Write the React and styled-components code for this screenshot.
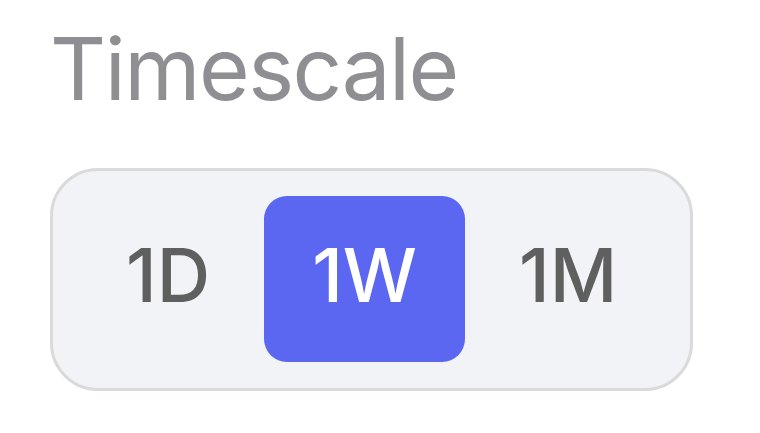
import React, { useState } from "react";
import styled, { createGlobalStyle } from "styled-components";

const Global = createGlobalStyle`
  html, body { margin: 0; padding: 0; background: #ffffff; }
  body { font-family: Inter, "Noto Sans", sans-serif; }
`;

const Page = styled.div`
  padding: 25px 0 0 50px;
  display: flex;
  flex-direction: column;
  align-items: flex-start;
  gap: 56px;
`;

const Title = styled.div`
  font-size: 87px;
  line-height: 1;
  font-weight: 400;
  color: #8e8e93;
  letter-spacing: -1.5px;
`;

const Segmented = styled.div`
  display: flex;
  align-items: stretch;
  gap: 6px;
  padding: 25px 25px 26px;
  background: #f2f3f7;
  border: 3px solid #dadada;
  border-radius: 48px;
`;

const Segment = styled.button`
  height: 166px;
  padding: 0 48px 8px;
  border: none;
  border-radius: 23px;
  font-family: Inter, "Noto Sans", sans-serif;
  font-size: 74px;
  line-height: 1;
  font-weight: 500;
  display: flex;
  align-items: center;
  justify-content: center;
  cursor: pointer;
  background: ${(p) => (p.$active ? "#5b67f1" : "transparent")};
  color: ${(p) => (p.$active ? "#ffffff" : "#5f5f5f")};
`;

export default function App() {
  const [value, setValue] = useState("1W");
  return (
    <>
      <Global />
      <Page>
        <Title>Timescale</Title>
        <Segmented>
          {["1D", "1W", "1M"].map((v) => (
            <Segment key={v} $active={v === value} onClick={() => setValue(v)}>
              {v}
            </Segment>
          ))}
        </Segmented>
      </Page>
    </>
  );
}
